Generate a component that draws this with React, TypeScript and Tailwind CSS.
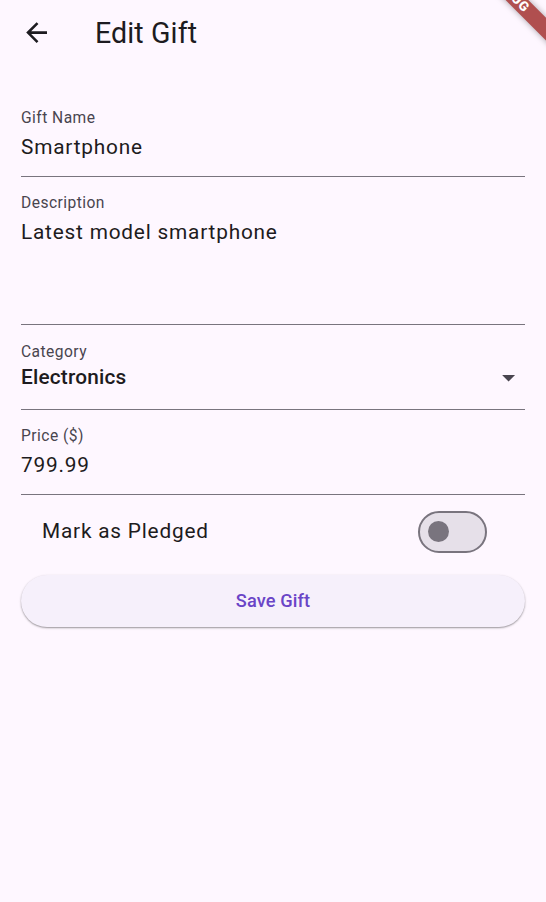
import React from "react";

function Field({
  label,
  value,
  pt = "pt-[15.6px]",
  valueClass = "h-[31.2px]",
}: {
  label: string;
  value: string;
  pt?: string;
  valueClass?: string;
}) {
  return (
    <div className={`${pt} pb-[12.5px] border-b border-[#79747e]`}>
      <div className="text-[15.6px] leading-[20.8px] tracking-[0.45px] text-[#49454f]">{label}</div>
      <div className={`mt-[4px] text-[20.8px] leading-[31.2px] tracking-[0.8px] text-[#1d1b20] ${valueClass}`}>
        {value}
      </div>
    </div>
  );
}

export default function App() {
  return (
    <div className="relative w-[546px] h-[902px] overflow-hidden bg-[#fef7ff] font-['Roboto',sans-serif] text-[#1d1b20]">
      {/* App bar */}
      <div className="h-[65px] flex items-center">
        <div className="w-[73px] flex justify-center items-center">
          <svg width="31.2" height="31.2" viewBox="0 0 24 24" fill="#1d1b20">
            <path d="M20 11H7.83l5.59-5.59L12 4l-8 8 8 8 1.41-1.41L7.83 13H20v-2z" />
          </svg>
        </div>
        <div className="ml-[22px] text-[28.6px] leading-[36px] tracking-[0.1px] text-[#1d1b20]">Edit Gift</div>
      </div>

      {/* Form */}
      <div className="px-[21px] pt-[27px]">
        <Field label="Gift Name" value="Smartphone" />
        <Field label="Description" value="Latest model smartphone" valueClass="h-[93.6px]" />

        <div className="pt-[17px] pb-[15px] border-b border-[#79747e]">
          <div className="text-[15.6px] leading-[20.8px] tracking-[0.45px] text-[#49454f]">Category</div>
          <div className="flex items-center justify-between h-[31.2px]">
            <span className="text-[20.8px] leading-[31.2px] font-medium tracking-[0.2px] text-[#1d1b20]">
              Electronics
            </span>
            <svg width="31.2" height="31.2" viewBox="0 0 24 24" fill="#49454f" className="mr-[1px]">
              <path d="M7 10l5 5 5-5z" />
            </svg>
          </div>
        </div>

        <Field label="Price ($)" value="799.99" pt="pt-[16px]" />

        {/* Switch tile */}
        <div className="h-[73px] flex items-center justify-between pl-[21px] pr-[38px]">
          <span className="text-[20.8px] leading-[31.2px] tracking-[0.8px] text-[#1d1b20]">Mark as Pledged</span>
          <div className="w-[69px] h-[42px] rounded-full border-[2.6px] border-[#79747e] bg-[#e6e0e9] flex items-center pl-[8px]">
            <div className="w-[21px] h-[21px] rounded-full bg-[#79747e]" />
          </div>
        </div>

        {/* Save button */}
        <button className="mt-[7px] w-full h-[52px] rounded-full bg-[#f6f0fb] shadow-[0_1px_1.5px_rgba(0,0,0,0.3),0_1px_3px_rgba(0,0,0,0.12)] flex items-center justify-center">
          <span className="text-[18.2px] leading-[26px] font-medium tracking-[0.13px] text-[#6a45c7]">Save Gift</span>
        </button>
      </div>

      {/* Debug banner */}
      <div className="absolute left-[431px] top-[-13.8px] w-[160px] h-[15.6px] rotate-45 bg-[#b04f4f] shadow-[0_0_6px_rgba(0,0,0,0.35)] flex items-center justify-center">
        <span className="text-[13.3px] leading-[15.6px] font-black text-white tracking-[0.5px]">DEBUG</span>
      </div>
    </div>
  );
}
